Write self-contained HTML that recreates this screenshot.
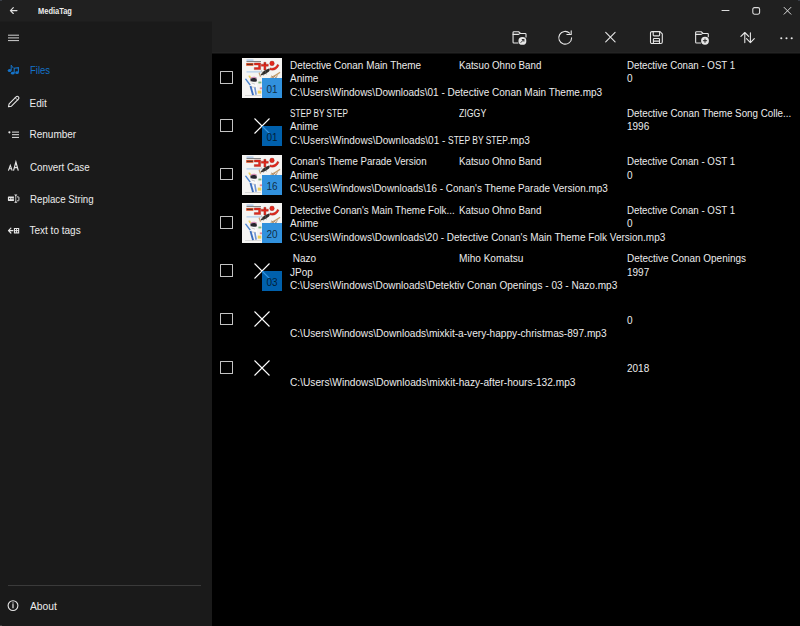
<!DOCTYPE html>
<html><head><meta charset="utf-8"><style>
html,body{margin:0;padding:0;}
body{width:800px;height:626px;overflow:hidden;position:relative;background:#202020;font-family:"Liberation Sans", sans-serif;color:#ececec;}
.side{position:absolute;left:0;top:22px;width:212px;height:604px;background:#1a1a1a;}
.content{position:absolute;left:212px;top:54px;width:588px;height:572px;background:#000;}
.t{position:absolute;white-space:pre;font-size:10px;line-height:13px;color:#ececec;transform-origin:0 0;}
.cb{position:absolute;left:220px;width:10.6px;height:10.6px;border:1.7px solid #c4c4c4;border-radius:0.5px}
.art{position:absolute;left:242px;width:40px;height:40px;}
.art svg{display:block}
.ov{position:absolute;left:262px;width:20px;height:20px;background:rgba(0,120,215,0.8);color:rgba(0,0,0,0.72);font-size:10px;line-height:23.5px;text-align:center;}
.nav{position:absolute;left:29.5px;font-size:10px;line-height:13px;white-space:pre;transform-origin:0 0;}
svg{overflow:visible}
</style></head><body>
<div class="side"></div>
<div class="content"></div>
<div style="position:absolute;left:0;top:21px;width:212px;height:1px;background:#1d1d1d"></div>
<div style="position:absolute;left:212px;top:52px;width:588px;height:1px;background:#242424"></div>
<div style="position:absolute;left:212px;top:53px;width:588px;height:1px;background:#121212"></div>
<div class="t" style="left:37.5px;top:4.98px;font-size:9px;line-height:12px;font-weight:bold;transform:scaleX(0.83)">MediaTag</div>
<div class="nav" style="top:63.53px;color:#1573c8;transform:scaleX(0.951)">Files</div>
<div class="nav" style="top:96.53px">Edit</div>
<div class="nav" style="top:128.23px">Renumber</div>
<div class="nav" style="top:160.53px;transform:scaleX(0.976)">Convert Case</div>
<div class="nav" style="top:192.73px;transform:scaleX(0.969)">Replace String</div>
<div class="nav" style="top:224.34px">Text to tags</div>
<div style="position:absolute;left:8px;top:584.5px;width:193px;height:1px;background:#3a3a3a"></div>
<div class="nav" style="top:600.03px;transform:scaleX(1.03)">About</div>
<div class="cb" style="top:71.00px"></div>
<div class="art" style="top:58.00px"><svg width="40" height="40" viewBox="0 0 40 40">
<rect width="40" height="40" fill="#f5f4f2"/>
<rect x="4.5" y="1.6" width="7" height="1" fill="#8db2e2"/>
<rect x="4.5" y="3.1" width="14.5" height="1" fill="#777"/>
<rect x="4.2" y="5" width="7.2" height="2.8" fill="#e4572c"/>
<rect x="4.8" y="5.8" width="6" height="1.1" fill="#5a2a20"/>
<g fill="#e3281c" stroke="#8a1a12" stroke-width="0.35">
<path d="M12.3 5h6.3v6.6h-6.3v-2h4.2v-2.6h-4.2z"/>
<path d="M19.3 6.2h7v2h-2.4v3.8h-2v-3.8h-2.6z M21.9 4.3h2v1.9h-2z"/>
<circle cx="30" cy="5.4" r="2.3"/>
<path d="M28 9.9c3.8.9 6-.5 7.3-3.6l1.7.9c-1.8 4.2-4.9 5.7-9.4 4.6z"/>
</g>
<rect x="4.5" y="13.4" width="14.5" height="1" fill="#9ec3ea"/>
<path d="M18.2 17.6c1.5-3.2 4.5-6 8.8-7.2 1 1 .8 2.4-.3 3.4-2.3 1.9-5 3.2-8.5 3.8z" fill="#2f2c2a"/>
<path d="M19.5 12.5l2 5.2M23 12l1.5 4.5" stroke="#666" stroke-width="0.5"/>
<path d="M28.5 19c3-1.2 6.2-3 9.3-5.2l.6 1c-3 2.4-6.4 4.2-9.6 5.3z" fill="#c29c6c"/>
<path d="M29.6 17.6l1.4 2.6 1.5-2 1.3 2.1 1.6-3" stroke="#9a7450" stroke-width="0.7" fill="none"/>
<path d="M17.6 14.2l1.4 4.4-1 .4-1.5-4.1z" fill="#c8a070"/>
<path d="M8.4 20.4c2-1 4.4-1 6.2 0l.3 2.8c-2 .8-4.4.8-6.3 0z" fill="#26262e"/>
<path d="M8.2 19.8c2.2-1.2 4.6-1.3 6.6-.2l-.3.9c-2-.9-4-.8-6 .2z" fill="#d68fb5"/>
<path d="M6.2 17.8l1.8-.4 1.2 2-1.7.8z" fill="#ecd05a"/>
<path d="M2.8 21.1l1.3-.7 4.7 6.4-1.2.8z" fill="#4e86cf"/>
<path d="M9.2 23.6c2.5.2 4.7 1.3 6 3.5l-.8 6-5.5-.4z" fill="#fbfbfb"/>
<path d="M9.6 25l3.5 1.2M9.8 29l4 .4" stroke="#999" stroke-width="0.5"/>
<path d="M7.6 28.2l1.8-.4 2.6 9.3-1.8.5z" fill="#3c6fc0"/>
<path d="M12 29.5l1.6-.3 1.3 7.4-1.5.3z" fill="#6f94d2"/>
<rect x="16.4" y="23.6" width="3" height="1.8" fill="#7ab47c"/>
<rect x="15.8" y="32.6" width="3.5" height="3" fill="#f0d25a"/>
<rect x="17.8" y="29.4" width="2.2" height="1.8" fill="#e48a9a"/>
<path d="M3 37.5h16" stroke="#c4c4c4" stroke-width="0.6"/>
</svg></div>
<div class="ov" style="top:78.00px">01</div>
<div class="t" style="left:290px;top:58.63px;transform:scaleX(0.9924)">Detective Conan Main Theme</div>
<div class="t" style="left:290px;top:72.13px">Anime</div>
<div class="t" style="left:290px;top:85.63px;transform:scaleX(1.0016)">C:\Users\Windows\Downloads\01 - Detective Conan Main Theme.mp3</div>
<div class="t" style="left:459px;top:58.63px;transform:scaleX(0.9738)">Katsuo Ohno Band</div>
<div class="t" style="left:627px;top:58.63px;transform:scaleX(0.9702)">Detective Conan - OST 1</div>
<div class="t" style="left:627px;top:72.13px">0</div>
<div class="cb" style="top:119.35px"></div>
<svg style="position:absolute;left:254px;top:117.95px" width="16" height="16" viewBox="0 0 16 16"><path d="M0.5 0.5L15.5 15.5M15.5 0.5L0.5 15.5" stroke="#fff" stroke-width="1.1" fill="none"/></svg>
<div class="ov" style="top:126.35px">01</div>
<div class="t" style="left:290px;top:106.98px;transform:scaleX(0.8191)">STEP BY STEP</div>
<div class="t" style="left:290px;top:120.48px">Anime</div>
<div class="t" style="left:290px;top:133.98px"><span style="letter-spacing:0.03px">C:\Users\Windows\Downloads\01 - </span><span style="display:inline-block;width:59.3px;vertical-align:top"><span style="display:inline-block;transform:scaleX(0.845);transform-origin:0 0">STEP BY STEP</span></span>.mp3</div>
<div class="t" style="left:459px;top:106.98px;transform:scaleX(0.8754)">ZIGGY</div>
<div class="t" style="left:627px;top:106.98px;transform:scaleX(0.9791)">Detective Conan Theme Song Colle...</div>
<div class="t" style="left:627px;top:120.48px">1996</div>
<div class="cb" style="top:167.70px"></div>
<div class="art" style="top:154.70px"><svg width="40" height="40" viewBox="0 0 40 40">
<rect width="40" height="40" fill="#f5f4f2"/>
<rect x="4.5" y="1.6" width="7" height="1" fill="#8db2e2"/>
<rect x="4.5" y="3.1" width="14.5" height="1" fill="#777"/>
<rect x="4.2" y="5" width="7.2" height="2.8" fill="#e4572c"/>
<rect x="4.8" y="5.8" width="6" height="1.1" fill="#5a2a20"/>
<g fill="#e3281c" stroke="#8a1a12" stroke-width="0.35">
<path d="M12.3 5h6.3v6.6h-6.3v-2h4.2v-2.6h-4.2z"/>
<path d="M19.3 6.2h7v2h-2.4v3.8h-2v-3.8h-2.6z M21.9 4.3h2v1.9h-2z"/>
<circle cx="30" cy="5.4" r="2.3"/>
<path d="M28 9.9c3.8.9 6-.5 7.3-3.6l1.7.9c-1.8 4.2-4.9 5.7-9.4 4.6z"/>
</g>
<rect x="4.5" y="13.4" width="14.5" height="1" fill="#9ec3ea"/>
<path d="M18.2 17.6c1.5-3.2 4.5-6 8.8-7.2 1 1 .8 2.4-.3 3.4-2.3 1.9-5 3.2-8.5 3.8z" fill="#2f2c2a"/>
<path d="M19.5 12.5l2 5.2M23 12l1.5 4.5" stroke="#666" stroke-width="0.5"/>
<path d="M28.5 19c3-1.2 6.2-3 9.3-5.2l.6 1c-3 2.4-6.4 4.2-9.6 5.3z" fill="#c29c6c"/>
<path d="M29.6 17.6l1.4 2.6 1.5-2 1.3 2.1 1.6-3" stroke="#9a7450" stroke-width="0.7" fill="none"/>
<path d="M17.6 14.2l1.4 4.4-1 .4-1.5-4.1z" fill="#c8a070"/>
<path d="M8.4 20.4c2-1 4.4-1 6.2 0l.3 2.8c-2 .8-4.4.8-6.3 0z" fill="#26262e"/>
<path d="M8.2 19.8c2.2-1.2 4.6-1.3 6.6-.2l-.3.9c-2-.9-4-.8-6 .2z" fill="#d68fb5"/>
<path d="M6.2 17.8l1.8-.4 1.2 2-1.7.8z" fill="#ecd05a"/>
<path d="M2.8 21.1l1.3-.7 4.7 6.4-1.2.8z" fill="#4e86cf"/>
<path d="M9.2 23.6c2.5.2 4.7 1.3 6 3.5l-.8 6-5.5-.4z" fill="#fbfbfb"/>
<path d="M9.6 25l3.5 1.2M9.8 29l4 .4" stroke="#999" stroke-width="0.5"/>
<path d="M7.6 28.2l1.8-.4 2.6 9.3-1.8.5z" fill="#3c6fc0"/>
<path d="M12 29.5l1.6-.3 1.3 7.4-1.5.3z" fill="#6f94d2"/>
<rect x="16.4" y="23.6" width="3" height="1.8" fill="#7ab47c"/>
<rect x="15.8" y="32.6" width="3.5" height="3" fill="#f0d25a"/>
<rect x="17.8" y="29.4" width="2.2" height="1.8" fill="#e48a9a"/>
<path d="M3 37.5h16" stroke="#c4c4c4" stroke-width="0.6"/>
</svg></div>
<div class="ov" style="top:174.70px">16</div>
<div class="t" style="left:290px;top:155.34px;transform:scaleX(0.9666)">Conan's Theme Parade Version</div>
<div class="t" style="left:290px;top:168.84px">Anime</div>
<div class="t" style="left:290px;top:182.34px;transform:scaleX(0.9906)">C:\Users\Windows\Downloads\16 - Conan's Theme Parade Version.mp3</div>
<div class="t" style="left:459px;top:155.34px;transform:scaleX(0.9738)">Katsuo Ohno Band</div>
<div class="t" style="left:627px;top:155.34px;transform:scaleX(0.9702)">Detective Conan - OST 1</div>
<div class="t" style="left:627px;top:168.84px">0</div>
<div class="cb" style="top:216.05px"></div>
<div class="art" style="top:203.05px"><svg width="40" height="40" viewBox="0 0 40 40">
<rect width="40" height="40" fill="#f5f4f2"/>
<rect x="4.5" y="1.6" width="7" height="1" fill="#8db2e2"/>
<rect x="4.5" y="3.1" width="14.5" height="1" fill="#777"/>
<rect x="4.2" y="5" width="7.2" height="2.8" fill="#e4572c"/>
<rect x="4.8" y="5.8" width="6" height="1.1" fill="#5a2a20"/>
<g fill="#e3281c" stroke="#8a1a12" stroke-width="0.35">
<path d="M12.3 5h6.3v6.6h-6.3v-2h4.2v-2.6h-4.2z"/>
<path d="M19.3 6.2h7v2h-2.4v3.8h-2v-3.8h-2.6z M21.9 4.3h2v1.9h-2z"/>
<circle cx="30" cy="5.4" r="2.3"/>
<path d="M28 9.9c3.8.9 6-.5 7.3-3.6l1.7.9c-1.8 4.2-4.9 5.7-9.4 4.6z"/>
</g>
<rect x="4.5" y="13.4" width="14.5" height="1" fill="#9ec3ea"/>
<path d="M18.2 17.6c1.5-3.2 4.5-6 8.8-7.2 1 1 .8 2.4-.3 3.4-2.3 1.9-5 3.2-8.5 3.8z" fill="#2f2c2a"/>
<path d="M19.5 12.5l2 5.2M23 12l1.5 4.5" stroke="#666" stroke-width="0.5"/>
<path d="M28.5 19c3-1.2 6.2-3 9.3-5.2l.6 1c-3 2.4-6.4 4.2-9.6 5.3z" fill="#c29c6c"/>
<path d="M29.6 17.6l1.4 2.6 1.5-2 1.3 2.1 1.6-3" stroke="#9a7450" stroke-width="0.7" fill="none"/>
<path d="M17.6 14.2l1.4 4.4-1 .4-1.5-4.1z" fill="#c8a070"/>
<path d="M8.4 20.4c2-1 4.4-1 6.2 0l.3 2.8c-2 .8-4.4.8-6.3 0z" fill="#26262e"/>
<path d="M8.2 19.8c2.2-1.2 4.6-1.3 6.6-.2l-.3.9c-2-.9-4-.8-6 .2z" fill="#d68fb5"/>
<path d="M6.2 17.8l1.8-.4 1.2 2-1.7.8z" fill="#ecd05a"/>
<path d="M2.8 21.1l1.3-.7 4.7 6.4-1.2.8z" fill="#4e86cf"/>
<path d="M9.2 23.6c2.5.2 4.7 1.3 6 3.5l-.8 6-5.5-.4z" fill="#fbfbfb"/>
<path d="M9.6 25l3.5 1.2M9.8 29l4 .4" stroke="#999" stroke-width="0.5"/>
<path d="M7.6 28.2l1.8-.4 2.6 9.3-1.8.5z" fill="#3c6fc0"/>
<path d="M12 29.5l1.6-.3 1.3 7.4-1.5.3z" fill="#6f94d2"/>
<rect x="16.4" y="23.6" width="3" height="1.8" fill="#7ab47c"/>
<rect x="15.8" y="32.6" width="3.5" height="3" fill="#f0d25a"/>
<rect x="17.8" y="29.4" width="2.2" height="1.8" fill="#e48a9a"/>
<path d="M3 37.5h16" stroke="#c4c4c4" stroke-width="0.6"/>
</svg></div>
<div class="ov" style="top:223.05px">20</div>
<div class="t" style="left:290px;top:203.69px;transform:scaleX(0.9739)">Detective Conan's Main Theme Folk...</div>
<div class="t" style="left:290px;top:217.19px">Anime</div>
<div class="t" style="left:290px;top:230.69px;transform:scaleX(0.9971)">C:\Users\Windows\Downloads\20 - Detective Conan's Main Theme Folk Version.mp3</div>
<div class="t" style="left:459px;top:203.69px;transform:scaleX(0.9738)">Katsuo Ohno Band</div>
<div class="t" style="left:627px;top:203.69px;transform:scaleX(0.9702)">Detective Conan - OST 1</div>
<div class="t" style="left:627px;top:217.19px">0</div>
<div class="cb" style="top:264.40px"></div>
<svg style="position:absolute;left:254px;top:263.00px" width="16" height="16" viewBox="0 0 16 16"><path d="M0.5 0.5L15.5 15.5M15.5 0.5L0.5 15.5" stroke="#fff" stroke-width="1.1" fill="none"/></svg>
<div class="ov" style="top:271.40px">03</div>
<div class="t" style="left:290px;top:252.03px"> Nazo</div>
<div class="t" style="left:290px;top:265.54px">JPop</div>
<div class="t" style="left:290px;top:279.04px;transform:scaleX(1.0049)">C:\Users\Windows\Downloads\Detektiv Conan Openings - 03 - Nazo.mp3</div>
<div class="t" style="left:459px;top:252.03px;transform:scaleX(1.0079)">Miho Komatsu</div>
<div class="t" style="left:627px;top:252.03px;transform:scaleX(0.9950)">Detective Conan Openings</div>
<div class="t" style="left:627px;top:265.54px">1997</div>
<div class="cb" style="top:312.75px"></div>
<svg style="position:absolute;left:254px;top:311.35px" width="16" height="16" viewBox="0 0 16 16"><path d="M0.5 0.5L15.5 15.5M15.5 0.5L0.5 15.5" stroke="#fff" stroke-width="1.1" fill="none"/></svg>
<div class="t" style="left:290px;top:327.39px;transform:scaleX(1.0118)">C:\Users\Windows\Downloads\mixkit-a-very-happy-christmas-897.mp3</div>
<div class="t" style="left:627px;top:313.89px">0</div>
<div class="cb" style="top:361.10px"></div>
<svg style="position:absolute;left:254px;top:359.70px" width="16" height="16" viewBox="0 0 16 16"><path d="M0.5 0.5L15.5 15.5M15.5 0.5L0.5 15.5" stroke="#fff" stroke-width="1.1" fill="none"/></svg>
<div class="t" style="left:290px;top:375.74px;transform:scaleX(1.0150)">C:\Users\Windows\Downloads\mixkit-hazy-after-hours-132.mp3</div>
<div class="t" style="left:627px;top:362.24px">2018</div>
<svg style="position:absolute;left:0;top:0" width="800" height="626" viewBox="0 0 800 626">
<g fill="none" stroke="#e6e6e6" stroke-width="1.1" stroke-linecap="round" stroke-linejoin="round">
 <path d="M517.9 43.05H513.9a.85.85 0 0 1-.85-.85V32.6a.85.85 0 0 1 .85-.85h4.7l1.8 1.7h4.75a.85.85 0 0 1 .85.85V37.1"/>
 <path d="M513.1 34.4h5.5l1.6-1.0"/>
 <path d="M571.6 37.9A6.4 6.4 0 1 1 569.6 33.1"/>
 <path d="M566.9 34.5h4.3v-3.6"/>
 <path d="M605.7 32.4l9.4 9.4M615.1 32.4l-9.4 9.4"/>
 <path d="M651.9 31.6h8.1l2.3 2.3v8.2a1.4 1.4 0 0 1-1.4 1.4h-9a1.4 1.4 0 0 1-1.4-1.4v-9.1a1.4 1.4 0 0 1 1.4-1.4z"/>
 <path d="M653.2 31.8v3.3a.8.8 0 0 0 .8.8h4.8a.8.8 0 0 0 .8-.8v-3.3"/>
 <path d="M653.4 43.3v-4.1a.7.7 0 0 1 .7-.7h4.7a.7.7 0 0 1 .7.7v4.1"/>
 <path d="M653.6 41.1h5.6"/>
 <path d="M700.5 43.05H696.5a.85.85 0 0 1-.85-.85V32.6a.85.85 0 0 1 .85-.85h4.7l1.8 1.7h4.45a.85.85 0 0 1 .85.85V36.7"/>
 <path d="M695.7 34.4h5.5l1.6-1.0"/>
 <path d="M744.8 42.6V32.6M740.9 36.4l3.9-3.9 3.9 3.9"/>
 <path d="M750.4 32.8V42.6M746.5 38.7l3.9 3.9 3.9-3.9"/>
 <path d="M722 10.5h7" stroke="#dcdcdc" stroke-width="1"/>
 <rect x="752.8" y="7.6" width="6.8" height="6.6" rx="1.6" stroke="#dcdcdc" stroke-width="1.1"/>
 <path d="M784.1 7.4l6.8 6.8M790.9 7.4l-6.8 6.8" stroke="#dcdcdc" stroke-width="1"/>
 <path d="M10.4 10.6h6.6M10.4 10.6l2.9-2.9M10.4 10.6l2.9 2.9" stroke="#e0e0e0" stroke-width="1.15"/>
 <path d="M8 35.2h11M8 37.9h11M8 40.6h11" stroke="#e6e6e6" stroke-width="0.9" stroke-linecap="butt"/>
 <g transform="translate(8.5 106.8) rotate(-45)"><path d="M0 0L2.5-1.65H12.4A1.65 1.65 0 0 1 12.4 1.65H2.5Z" stroke-width="1.1"/><path d="M11.2 -1.5V1.5" stroke-width="0.8"/></g>
 <path d="M12 132.1h7M12 134.7h7M12 137.4h7" stroke-width="1" stroke-linecap="butt"/>
 <path d="M8.6 230.6h4.3M10.9 228.2l-2.4 2.4 2.4 2.4" stroke-width="1.2"/>
 <circle cx="13" cy="605.6" r="4.9" stroke-width="1.1"/>
 <path d="M13 604.6v3.2" stroke-width="1.2"/><circle cx="13" cy="603" r="0.65" fill="#e6e6e6" stroke="none"/>
</g>
<g fill="#e6e6e6" stroke="none">
 <circle cx="522.4" cy="40.9" r="3.95"/>
 <circle cx="705" cy="40.75" r="3.9"/>
 <circle cx="781.3" cy="38.2" r="1.05"/><circle cx="786.5" cy="38.2" r="1.05"/><circle cx="791.7" cy="38.2" r="1.05"/>
 <circle cx="9.4" cy="132.3" r="1.1"/>
</g>
<g fill="none" stroke="#e6e6e6" stroke-linejoin="miter">
 <path d="M8.4 170.6L10.3 165.4L12.2 170.6M9.1 168.8h2.4" stroke-width="1.1"/>
 <path d="M13.5 170.6L15.9 162L18.3 170.6M14.4 167.6h3" stroke-width="1.2"/>
</g>
<g fill="#e6e6e6" stroke="none">
 <path d="M8.6 196.4h5.3v4.5H8.6a.7.7 0 0 1-.7-.7v-3.1a.7.7 0 0 1 .7-.7z"/>
 <path d="M14.2 194.5h3.2l-1.2 1.4v5.4l1.2 1.4h-3.2l1.2-1.4v-5.4z"/>
 <path d="M13.9 227.9h5.3v5.5h-5.3z"/>
</g>
<g fill="none" stroke="#e6e6e6" stroke-width="0.9">
 <path d="M16.9 196.9h1.5a.5.5 0 0 1 .5.5v2.9a.5.5 0 0 1-.5.5h-1.5"/>
</g>
<g fill="#1a1a1a">
 <rect x="15" y="229" width="1.1" height="1.1"/><rect x="17" y="229" width="1.1" height="1.1"/>
 <rect x="15" y="231.2" width="1.1" height="1.1"/><rect x="17" y="231.2" width="1.1" height="1.1"/>
 <rect x="9" y="198.2" width="1" height="1"/><rect x="10.7" y="198.2" width="1" height="1"/><rect x="12.4" y="198.2" width="1" height="1"/>
</g>
<g fill="none" stroke="#202020" stroke-width="0.95" stroke-linecap="round">
 <path d="M521 42.4l2.8-2.8M522.2 39.5h1.7v1.7"/>
 <path d="M703.3 40.7h3.4M705 39v3.4"/>
</g>
<g fill="#1573c8" stroke="#1573c8">
 <ellipse cx="9.6" cy="70.6" rx="1.9" ry="1.5" stroke="none"/>
 <path d="M11.2 70.4V65.2c.6 1 1.6 1.6 1.9 2.7" fill="none" stroke-width="1"/>
 <ellipse cx="12.7" cy="73.2" rx="1.8" ry="1.4" stroke="none"/>
 <ellipse cx="17" cy="72.7" rx="1.8" ry="1.4" stroke="none"/>
 <path d="M14.2 73V68.2l4.2-.6V72.6" fill="none" stroke-width="1.1"/>
</g>
</svg>

<div style="position:absolute;left:0;top:0;width:2px;height:1px;background:#3a3f48"></div>
<div style="position:absolute;left:798px;top:0;width:2px;height:1px;background:#3a3f48"></div>
<div style="position:absolute;left:0;top:625px;width:2px;height:1px;background:#3c3c3c"></div>
</body></html>
